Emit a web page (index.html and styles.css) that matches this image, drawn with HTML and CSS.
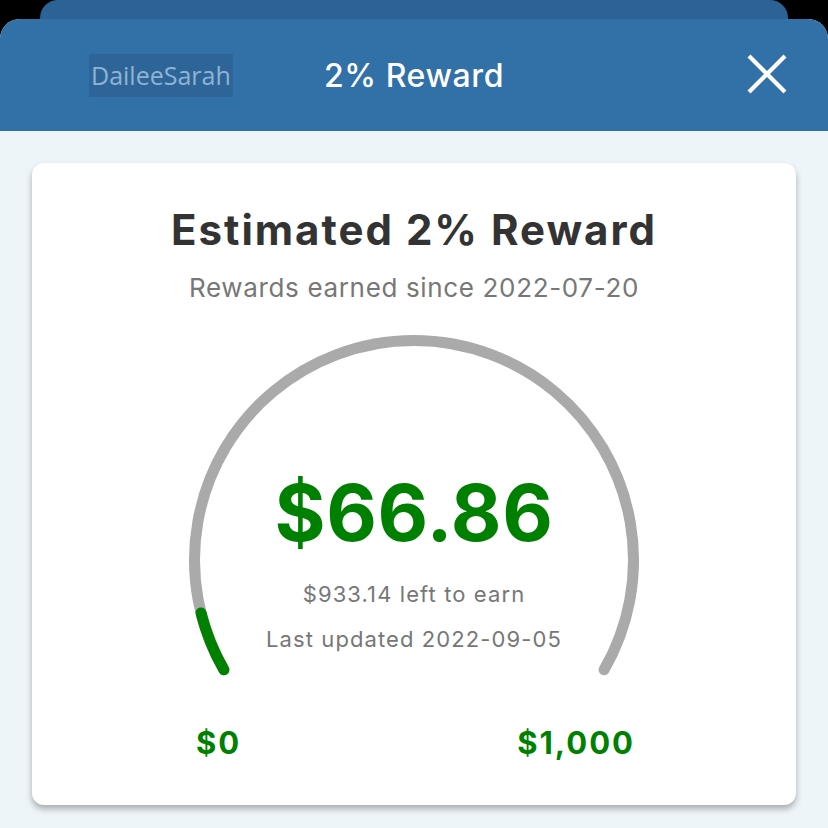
FILE: index.html
```html
<!DOCTYPE html>
<html lang="en">
<head>
  <meta charset="UTF-8">
  <title>2% Reward</title>
  <link rel="stylesheet" href="styles.css">
</head>
<body>
  <div class="back_sheet"></div>
  <div class="sheet">
    <div class="sheet_header">
      <div class="user_tag">DaileeSarah</div>
      <h1 class="sheet_title">2% Reward</h1>
      <button type="button" class="close_btn" aria-label="Close">
        <svg width="40" height="40" viewBox="0 0 40 40">
          <path d="M2 2 L38 38 M38 2 L2 38" stroke="#fff" stroke-width="4.2" fill="none"/>
        </svg>
      </button>
    </div>
    <div class="sheet_body">
      <div class="reward_card">
        <h2 class="card_title">Estimated 2% Reward</h2>
        <div class="card_sub">Rewards earned since 2022-07-20</div>

        <div class="gauge">
          <svg class="gauge_svg" width="460" height="350" viewBox="0 0 460 350">
            <path d="M 39.91 339.75 A 219.5 219.5 0 1 1 420.09 339.75" stroke="#aaaaaa" stroke-width="11" fill="none" stroke-linecap="round"/>
            <path d="M 39.91 339.75 A 219.5 219.5 0 0 1 17.0 282.9" stroke="#008000" stroke-width="11" fill="none" stroke-linecap="round"/>
          </svg>
          <div class="gauge_text">
            <div class="amount">$66.86</div>
            <div class="left_to_earn">$933.14 left to earn</div>
            <div class="updated">Last updated 2022-09-05</div>
          </div>
        </div>

        <div class="gauge_labels">
          <span>$0</span>
          <span>$1,000</span>
        </div>
      </div>
    </div>
  </div>
</body>
</html>
```

FILE: styles.css
```css
* {
	box-sizing: border-box;
}

body {
	margin: 0;
	min-height: 100vh;
	background-color: #000;
	display: flex;
	flex-direction: column;
	font-family: Inter, "Liberation Sans", sans-serif;
}

.back_sheet {
	height: 19px;
	margin: 0 40px;
	background-color: #2c6396;
	border-top-left-radius: 18px;
	border-top-right-radius: 18px;
}

.sheet {
	flex: 1;
	display: flex;
	flex-direction: column;
	background-color: #eef5f9;
	border-top-left-radius: 20px;
	border-top-right-radius: 20px;
	overflow: hidden;
}

.sheet_header {
	height: 112px;
	padding: 0 41px;
	background-color: #3270a8;
	display: grid;
	grid-template-columns: 1fr auto 1fr;
	align-items: center;
}

.user_tag {
	justify-self: start;
	margin-left: 48px;
	padding: 0 2px;
	height: 43px;
	line-height: 43px;
	background-color: #2e6598;
	color: #8fb3d4;
	font-family: "Open Sans", sans-serif;
	font-size: 25px;
}

.sheet_title {
	margin: 0;
	color: #fff;
	font-size: 32px;
	font-weight: 500;
	letter-spacing: 0.6px;
}

.close_btn {
	justify-self: end;
	margin-bottom: 3px;
	padding: 0;
	border: none;
	background: none;
	display: flex;
}

.sheet_body {
	flex: 1;
	padding: 32px;
}

.reward_card {
	background-color: #fff;
	border-radius: 12px;
	box-shadow: 0px 4px 6px 0px rgb(0 0 0 / 30%);
	padding: 42px 0 45px;
	display: flex;
	flex-direction: column;
	align-items: center;
}

.card_title {
	margin: 0;
	font-size: 42px;
	line-height: 50px;
	font-weight: 700;
	letter-spacing: 2px;
	color: #333;
}

.card_sub {
	margin-top: 17px;
	font-size: 26px;
	line-height: 32px;
	letter-spacing: 0.65px;
	color: #777;
}

.gauge {
	margin-top: 26px;
	display: grid;
}

.gauge_svg,
.gauge_text {
	grid-area: 1 / 1;
}

.gauge_svg {
	display: block;
}

.gauge_text {
	padding-top: 138px;
	display: flex;
	flex-direction: column;
	align-items: center;
	color: #777;
}

.amount {
	font-size: 78px;
	line-height: 90px;
	font-weight: 700;
	letter-spacing: 0.6px;
	color: #008000;
}

.left_to_earn {
	margin-top: 22px;
	font-size: 22px;
	line-height: 28px;
	letter-spacing: 1.1px;
}

.updated {
	margin-top: 17px;
	font-size: 22px;
	line-height: 28px;
	letter-spacing: 1.1px;
}

.gauge_labels {
	width: 450px;
	margin-top: 45px;
	padding: 0 4px 0 7px;
	display: flex;
	justify-content: space-between;
	font-size: 31px;
	line-height: 35px;
	font-weight: 700;
	letter-spacing: 2px;
	color: #008000;
}
```
